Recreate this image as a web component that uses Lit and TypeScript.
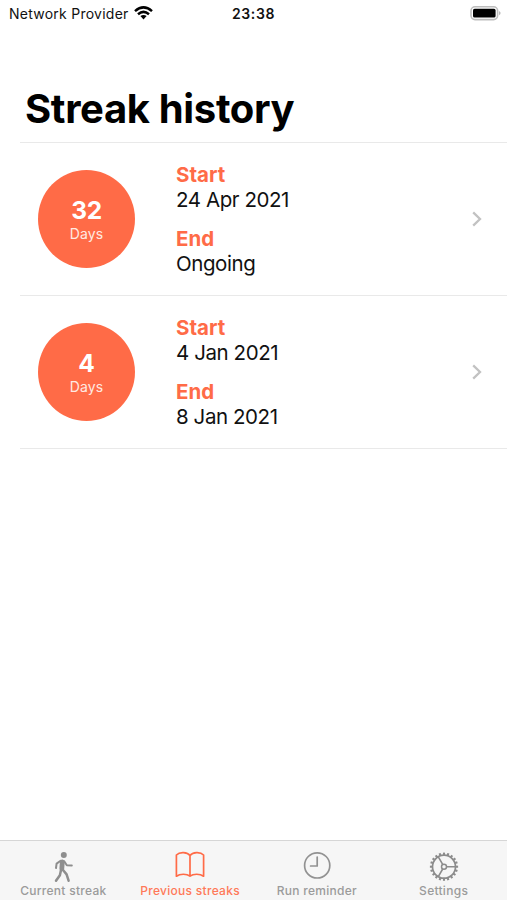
import { LitElement, html, css, svg } from "lit";
import { customElement, property, state } from "lit/decorators.js";
import { classMap } from "lit/directives/class-map.js";

interface Streak {
  days: number;
  start: string;
  end: string;
}

const teeth = Array.from({ length: 20 }, (_, i) => i * 18);

const walkIcon = svg`
  <svg width="30" height="32" viewBox="0 0 30 32" fill="none" stroke="#8e8e8e" stroke-linecap="round" stroke-linejoin="round">
    <circle cx="15.8" cy="4.1" r="3" fill="#8e8e8e" stroke="none"/>
    <path d="M14.3 11L13.8 17.8" stroke-width="4.8"/>
    <path d="M12.6 9.8L8.6 12.6L8 17M16.2 10.2L18.8 14.3L23.8 14.5" stroke-width="2"/>
    <path d="M13 19L11.9 24.2L8 29.8M15 19L18.6 23.4L20.6 29.7" stroke-width="2.5"/>
  </svg>`;

const bookIcon = svg`
  <svg width="32" height="32" viewBox="0 0 32 32" fill="none" stroke="#ff6b47" stroke-width="1.7" stroke-linejoin="round">
    <path d="M16 4.6C13.4 .9 5.6 .6 2.4 4V25.2C6 22.6 12.8 22.6 16 25.2C19.2 22.6 26 22.6 29.6 25.2V4C26.4 .6 18.6 .9 16 4.6ZM16 4.6V25.2"/>
  </svg>`;

const clockIcon = svg`
  <svg width="32" height="32" viewBox="0 0 32 32" fill="none" stroke="#929292" stroke-width="1.7" stroke-linecap="round" stroke-linejoin="round">
    <circle cx="16.2" cy="14.4" r="12.6"/>
    <path d="M16.2 6V15H9.6"/>
  </svg>`;

const gearIcon = svg`
  <svg width="32" height="32" viewBox="0 0 32 32" fill="none" stroke="#8c8c8c">
    <circle cx="16" cy="15.7" r="11.5" stroke-width="1.7"/>
    <circle cx="16" cy="15.7" r="2.5" stroke-width="1.5"/>
    ${teeth.map((a) => svg`<path d="M16 1.6V4" stroke-width="2.1" transform="rotate(${a} 16 15.7)"/>`)}
    <path d="M18.6 15.7H27.4M14.7 13.4L10.3 5.8M14.7 18L10.3 25.6" stroke-width="1.6"/>
  </svg>`;

@customElement("status-bar")
class StatusBar extends LitElement {
  static styles = css`
    :host { display: grid; grid-template-columns: 1fr auto 1fr; height: 26px; margin-bottom: 2px; align-items: center; color: #111; }
    .left { display: flex; align-items: center; padding-left: 9px; gap: 5px; font-size: 14px; letter-spacing: 0.25px; white-space: nowrap; }
    .time { font-size: 14px; font-weight: 600; letter-spacing: 0.6px; padding-top: 1px; }
    .left span { padding-top: 1px; }
    .right { display: flex; justify-content: flex-end; padding-right: 5px; }
    svg { display: block; }
  `;
  render() {
    return html`
      <div class="left">
        <span>Network Provider</span>
        <svg width="19" height="14" viewBox="0 0 19 14" fill="none" stroke="#000" stroke-width="2.5">
          <path d="M1 5.1Q9.5 -2.3 18 5.1"/>
          <path d="M4 8.2Q9.5 3.5 15 8.2"/>
          <path d="M6.4 10.1Q9.5 7.7 12.6 10.1L9.5 13.4Z" fill="#000" stroke="none"/>
        </svg>
      </div>
      <span class="time">23:38</span>
      <div class="right">
        <svg width="32" height="16" viewBox="0 0 32 16">
          <rect x="1" y="1.8" width="26.6" height="12.8" rx="4" fill="#fff" stroke="#bdbdbd" stroke-width="1.6"/>
          <rect x="3" y="3.8" width="22.6" height="8.8" rx="1.6" fill="#000"/>
          <path d="M29.2 6.1Q31.8 8.2 29.2 10.3Z" fill="#aaa"/>
        </svg>
      </div>`;
  }
}

@customElement("streak-row")
class StreakRow extends LitElement {
  @property({ attribute: false }) streak!: Streak;
  static styles = css`
    :host { display: flex; align-items: center; box-sizing: border-box; height: 153px; margin-left: 20px; padding: 0 24px 0 18px; border-bottom: 1px solid #e9e9e9; }
    .badge { width: 97px; height: 98px; border-radius: 50%; background: #ff6b47; color: #fff; display: flex; flex-direction: column; align-items: center; justify-content: center; padding-top: 2px; box-sizing: border-box; }
    .count { font-size: 24.5px; line-height: 27px; font-weight: 700; letter-spacing: -0.3px; }
    .unit { font-size: 14px; line-height: 19px; color: #ffe9e2; letter-spacing: 0.1px; }
    .dates { margin: 0 auto 0 41px; display: grid; gap: 14px; font-size: 20.5px; line-height: 25px; color: #111; }
    .label { color: #ff6b47; font-weight: 700; }
    .value { letter-spacing: -0.42px; }
    .chevron { display: block; }
  `;
  render() {
    const { days, start, end } = this.streak;
    return html`
      <div class="badge"><span class="count">${days}</span><span class="unit">Days</span></div>
      <div class="dates">
        <div><div class="label">Start</div><div class="value">${start}</div></div>
        <div><div class="label">End</div><div class="value">${end}</div></div>
      </div>
      <svg class="chevron" width="12" height="16" viewBox="0 0 12 16" fill="none" stroke="#c2c2c2" stroke-width="2.3">
        <path d="M2.2 1.4L9 8L2.2 14.6"/>
      </svg>`;
  }
}

@customElement("tab-bar")
class TabBar extends LitElement {
  @state() private active = 1;
  private tabs = [
    { label: "Current streak", icon: walkIcon },
    { label: "Previous streaks", icon: bookIcon },
    { label: "Run reminder", icon: clockIcon },
    { label: "Settings", icon: gearIcon },
  ];
  static styles = css`
    :host { display: grid; grid-template-columns: repeat(4, 1fr); height: 60px; box-sizing: border-box; border-top: 1px solid #d6d6d6; background: #f6f6f6; }
    .tab { display: flex; flex-direction: column; align-items: center; padding-top: 10px; color: #9b9b9b; font-size: 12px; line-height: 16px; font-weight: 500; letter-spacing: 0.28px; white-space: nowrap; }
    .tab svg { display: block; height: 32px; }
    .active { color: #ff7959; }
  `;
  render() {
    return this.tabs.map((t, i) => html`
      <div class=${classMap({ tab: true, active: i === this.active })} @click=${() => (this.active = i)}>
        ${t.icon}<span>${t.label}</span>
      </div>`);
  }
}

@customElement("app-root")
class AppRoot extends LitElement {
  private streaks: Streak[] = [
    { days: 32, start: "24 Apr 2021", end: "Ongoing" },
    { days: 4, start: "4 Jan 2021", end: "8 Jan 2021" },
  ];
  static styles = css`
    :host { display: flex; flex-direction: column; height: 900px; background: #fff; font-family: Inter, "Liberation Sans", sans-serif; overflow: hidden; }
    .title { margin: 56px 0 0 20px; padding-left: 5px; height: 59px; box-sizing: border-box; border-bottom: 1px solid #e9e9e9; font-size: 40px; line-height: 50px; font-weight: 700; letter-spacing: -0.35px; color: #000; }
    .list { flex: 1; }
  `;
  render() {
    return html`
      <status-bar></status-bar>
      <h1 class="title">Streak history</h1>
      <div class="list">${this.streaks.map((s) => html`<streak-row .streak=${s}></streak-row>`)}</div>
      <tab-bar></tab-bar>`;
  }
}
